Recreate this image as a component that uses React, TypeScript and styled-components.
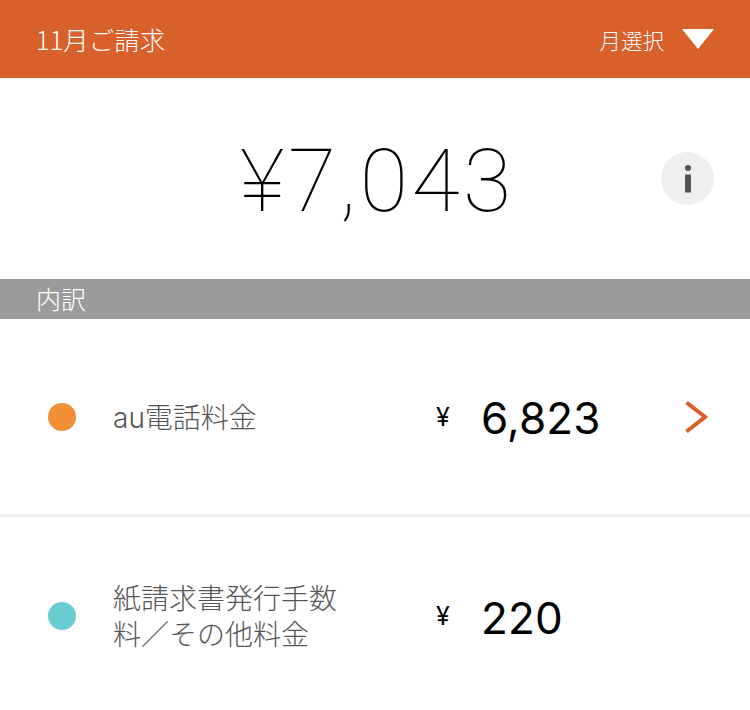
import React from 'react';
import styled, { createGlobalStyle } from 'styled-components';

const GlobalStyle = createGlobalStyle`
  html, body {
    margin: 0;
    padding: 0;
    height: 710px;
    overflow: hidden;
    background: #fff;
    font-family: Inter, "Noto Sans CJK JP", sans-serif;
  }
`;

const Page = styled.div`
  width: 750px;
  height: 710px;
  overflow: hidden;
`;

const Header = styled.header`
  height: 78px;
  background: #d8602b;
  color: #fff;
  display: flex;
  align-items: center;
  justify-content: space-between;
  padding: 0 36px 0 36px;
`;

const Title = styled.h1`
  margin: 0 0 2px;
  font-size: 25.5px;
  font-weight: 300;
  font-family: "Noto Sans CJK JP", sans-serif;
`;

const MonthSelect = styled.div`
  display: flex;
  align-items: center;
  gap: 18px;
  font-size: 21.5px;
  font-weight: 300;
  font-family: "Noto Sans CJK JP", sans-serif;
`;

const Caret = styled.span`
  width: 0;
  height: 0;
  border-left: 16px solid transparent;
  border-right: 16px solid transparent;
  border-top: 20px solid #fff;
`;

const TotalArea = styled.section`
  height: 201px;
  display: flex;
  align-items: center;
  justify-content: space-between;
  padding: 0 36px 0 240px;
`;

const TotalAmount = styled.div`
  padding-top: 4px;
  font-family: Roboto, sans-serif;
  font-size: 88px;
  font-weight: 100;
  color: #000;
  line-height: 1;
  letter-spacing: 3.5px;
`;

const InfoButton = styled.div`
  width: 53px;
  height: 53px;
  border-radius: 50%;
  background: #efefef;
  display: flex;
  align-items: center;
  justify-content: center;
`;

const SectionBar = styled.div`
  height: 40px;
  background: #9b9b9b;
  color: #fff;
  padding-left: 36px;
  font-size: 25px;
  font-weight: 300;
  line-height: 38px;
  font-family: "Noto Sans CJK JP", sans-serif;
`;

const Row = styled.div<{ $divider?: boolean }>`
  box-sizing: border-box;
  height: 198px;
  display: flex;
  align-items: center;
  padding: 0 42px 0 48px;
  border-bottom: ${({ $divider }) => ($divider ? '3px solid #f0f0f0' : 'none')};
`;

const Dot = styled.span<{ $color: string }>`
  width: 28px;
  height: 28px;
  border-radius: 50%;
  background: ${({ $color }) => $color};
  flex: none;
`;

const Label = styled.div`
  width: 323px;
  margin-left: 37px;
  box-sizing: border-box;
  padding: 2px 95px 0 0;
  font-size: 28px;
  line-height: 36px;
  font-weight: 300;
  color: #555;
`;

const Yen = styled.span`
  width: 46px;
  font-size: 25px;
  color: #000;
  flex: none;
`;

const Amount = styled.span`
  padding-top: 3px;
  margin-left: -1px;
  font-size: 44px;
  font-weight: 400;
  color: #000;
  letter-spacing: 0.2px;
  flex: 1;
`;

const Chevron = () => (
  <svg width="23" height="32" viewBox="0 0 23 32" fill="none">
    <path d="M1.5 1.5 L20 16 L1.5 30.5" stroke="#d8602b" strokeWidth="4" />
  </svg>
);

const InfoIcon = () => (
  <svg width="10" height="28" viewBox="0 0 10 28">
    <circle cx="5" cy="3" r="3" fill="#555" />
    <rect x="2" y="9.5" width="6" height="18" fill="#555" />
  </svg>
);

const rows = [
  { label: 'au電話料金', amount: '6,823', color: '#f28e35', more: true },
  { label: '紙請求書発行手数料／その他料金', amount: '220', color: '#6accd1', more: false },
];

export default function App() {
  return (
    <Page>
      <GlobalStyle />
      <Header>
        <Title>11月ご請求</Title>
        <MonthSelect>
          月選択
          <Caret />
        </MonthSelect>
      </Header>
      <TotalArea>
        <TotalAmount>¥7,043</TotalAmount>
        <InfoButton>
          <InfoIcon />
        </InfoButton>
      </TotalArea>
      <SectionBar>内訳</SectionBar>
      {rows.map((row, i) => (
        <Row key={row.label} $divider={i === 0}>
          <Dot $color={row.color} />
          <Label>{row.label}</Label>
          <Yen>¥</Yen>
          <Amount>{row.amount}</Amount>
          {row.more && <Chevron />}
        </Row>
      ))}
    </Page>
  );
}
